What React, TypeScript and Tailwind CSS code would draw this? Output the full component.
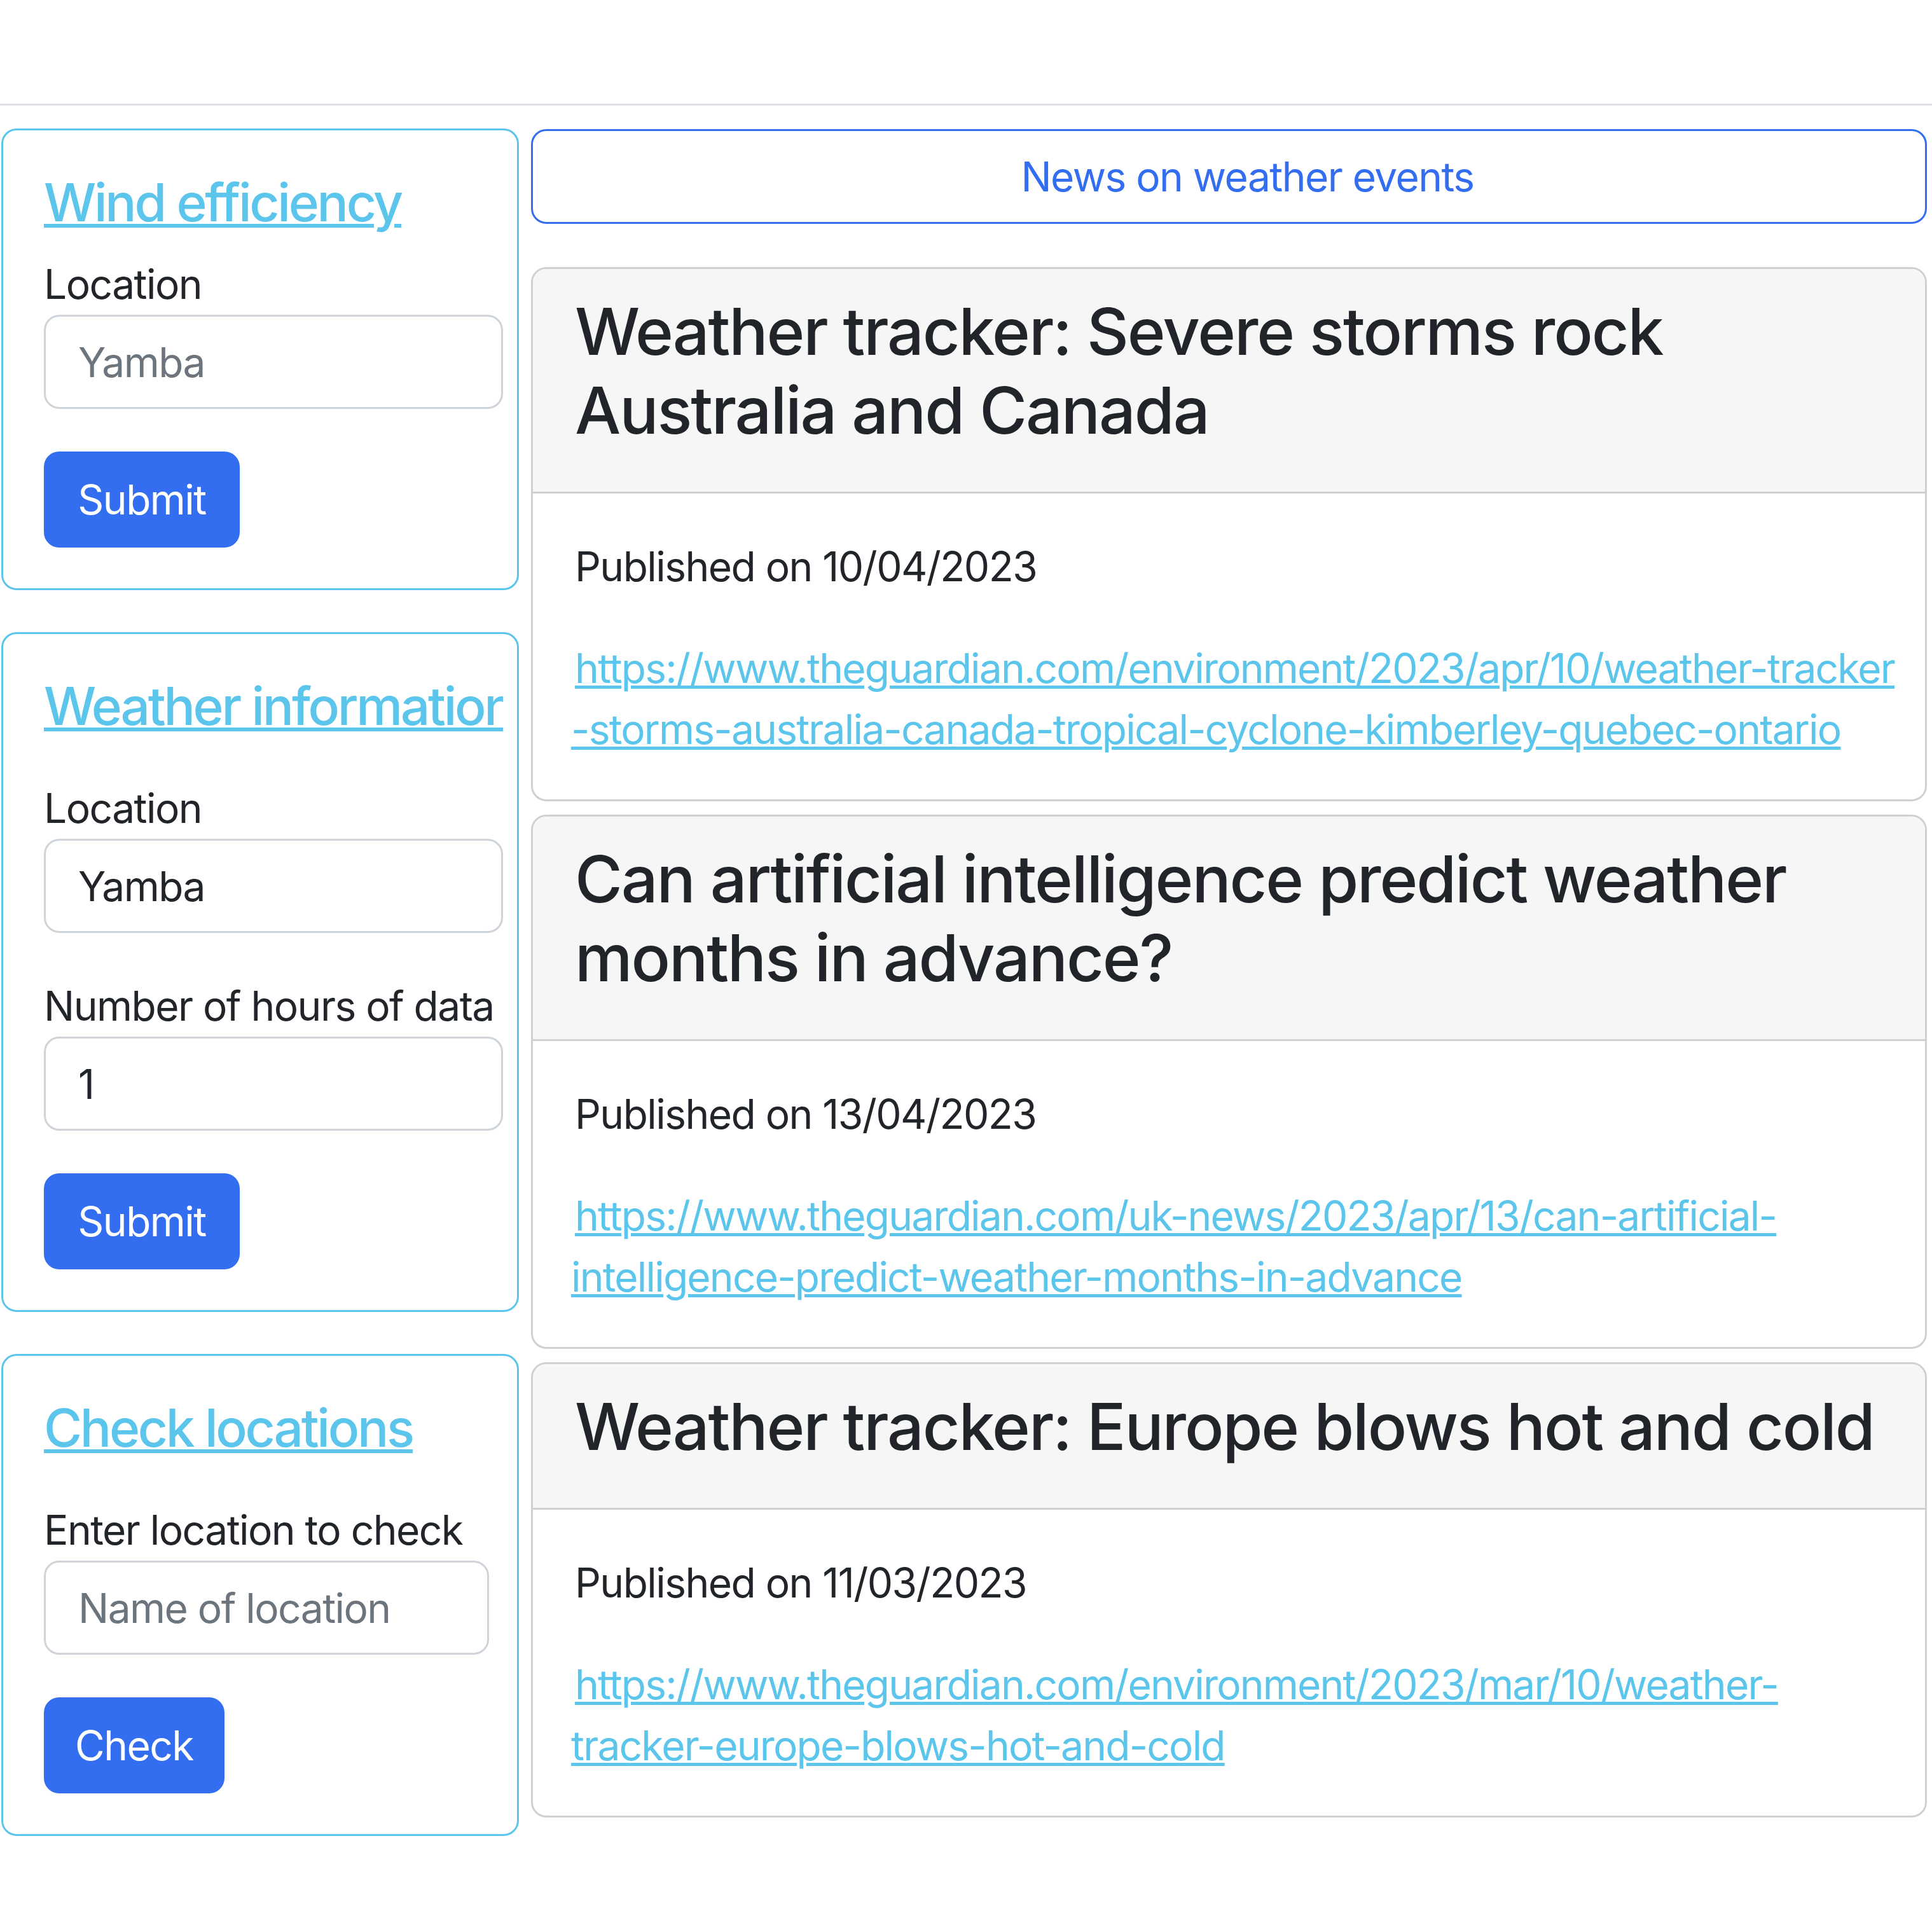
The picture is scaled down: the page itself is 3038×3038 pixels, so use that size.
type Field = { label: string; value: string; placeholder: string; inputWidth?: string };

interface Article {
  title: string[];
  date: string;
  url: string[];
}

const ARTICLES: Article[] = [
  {
    title: ['Weather tracker: Severe storms rock', 'Australia and Canada'],
    date: '10/04/2023',
    url: [
      'https://www.theguardian.com/environment/2023/apr/10/weather-tracker',
      '-storms-australia-canada-tropical-cyclone-kimberley-quebec-ontario'
    ]
  },
  {
    title: ['Can artificial intelligence predict weather', 'months in advance?'],
    date: '13/04/2023',
    url: [
      'https://www.theguardian.com/uk-news/2023/apr/13/can-artificial-',
      'intelligence-predict-weather-months-in-advance'
    ]
  },
  {
    title: ['Weather tracker: Europe blows hot and cold'],
    date: '11/03/2023',
    url: ['https://www.theguardian.com/environment/2023/mar/10/weather-', 'tracker-europe-blows-hot-and-cold']
  }
];

// Body text is Inter squeezed a little so widths line up with the system font of the original.
const BODY = 'text-[64px] leading-[96px] tracking-[-0.024em]';

function TextInput({ field }: { field: Field }) {
  return (
    <div className="flex flex-col">
      <label className={`${BODY} whitespace-nowrap`}>{field.label}</label>
      <input
        readOnly
        value={field.value}
        placeholder={field.placeholder}
        className={`${field.inputWidth ?? 'w-[722px]'} h-[148px] rounded-[24px] border-[3px] border-[#ced4da] bg-white pl-[51px] ${BODY} text-[#212529] outline-none placeholder:text-[#6c757d]`}
      />
    </div>
  );
}

function SideCard({
  title,
  fields,
  action,
  buttonWidth,
  titleGap
}: {
  title: string;
  fields: Field[];
  action: string;
  buttonWidth: string;
  titleGap: string;
}) {
  return (
    <div className="rounded-[24px] border-[3px] border-[#5bc5ec] pt-[64px] pr-[22px] pb-[64px] pl-[64px]">
      <h5
        className={`w-[722px] overflow-hidden whitespace-nowrap text-[82px] leading-[100px] font-medium tracking-[-0.04em] ${titleGap}`}
      >
        <a href="#" className="text-[#5bc5ec] underline decoration-[6px] underline-offset-[4px]">
          {title}
        </a>
      </h5>
      <div className="flex flex-col gap-[67px]">
        {fields.map(f => (
          <TextInput key={f.label} field={f} />
        ))}
      </div>
      <button
        className={`mt-[67px] flex h-[151px] ${buttonWidth} items-center justify-center rounded-[24px] bg-[#346ef0] ${BODY} text-white`}
      >
        {action}
      </button>
    </div>
  );
}

function ArticleCard({ article }: { article: Article }) {
  return (
    <div className="overflow-hidden rounded-[24px] border-[3px] border-[#d0d0d0]">
      <div className="border-b-[3px] border-[#d0d0d0] bg-[#f6f6f6] pt-[36px] pr-[40px] pb-[66px] pl-[66px]">
        <h3 className="text-[102px] leading-[124px] font-medium tracking-[-0.021em] whitespace-nowrap">
          {article.title.map((line, i) => (
            <span key={i} className="block">
              {line}
            </span>
          ))}
        </h3>
      </div>
      <div className="pt-[67px] pr-[40px] pb-[62px] pl-[66px]">
        <p className={`mb-[64px] ${BODY}`}>Published on {article.date}</p>
        <a
          href="#"
          className="block text-[64px] leading-[96px] tracking-[-0.028em] text-[#5bc5ec] underline decoration-[5px] underline-offset-[4px] whitespace-nowrap"
        >
          {article.url.map((line, i) => (
            <span key={i} className={i === 0 ? 'block' : 'block -ml-[6px]'}>
              {line}
            </span>
          ))}
        </a>
      </div>
    </div>
  );
}

export default function App() {
  return (
    <div className="min-h-screen bg-white font-['Inter','Noto_Sans',sans-serif] text-[#212529]">
      <div className="h-[166px] border-b-[3px] border-[#dee2e6]" />
      <div className="flex gap-[19px] pt-[36px] pl-[2px]">
        <div className="flex w-[814px] shrink-0 flex-col gap-[66px]">
          <SideCard
            title="Wind efficiency"
            fields={[{ label: 'Location', value: '', placeholder: 'Yamba' }]}
            action="Submit"
            buttonWidth="w-[308px]"
            titleGap="mb-[30px]"
          />
          <SideCard
            title="Weather information"
            fields={[
              { label: 'Location', value: 'Yamba', placeholder: '' },
              { label: 'Number of hours of data', value: '1', placeholder: '' }
            ]}
            action="Submit"
            buttonWidth="w-[308px]"
            titleGap="mb-[62px]"
          />
          <SideCard
            title="Check locations"
            fields={[{ label: 'Enter location to check', value: '', placeholder: 'Name of location', inputWidth: 'w-[700px]' }]}
            action="Check"
            buttonWidth="w-[284px]"
            titleGap="mb-[62px]"
          />
        </div>
        <div className="flex w-[2195px] shrink-0 flex-col pt-[1px]">
          <button
            className={`flex h-[149px] items-center justify-center rounded-[24px] border-[3px] border-[#346ef0] pl-[58px] ${BODY} text-[#346ef0]`}
          >
            News on weather events
          </button>
          <div className="mt-[68px] flex flex-col gap-[21px]">
            {ARTICLES.map(a => (
              <ArticleCard key={a.date} article={a} />
            ))}
          </div>
        </div>
      </div>
    </div>
  );
}
